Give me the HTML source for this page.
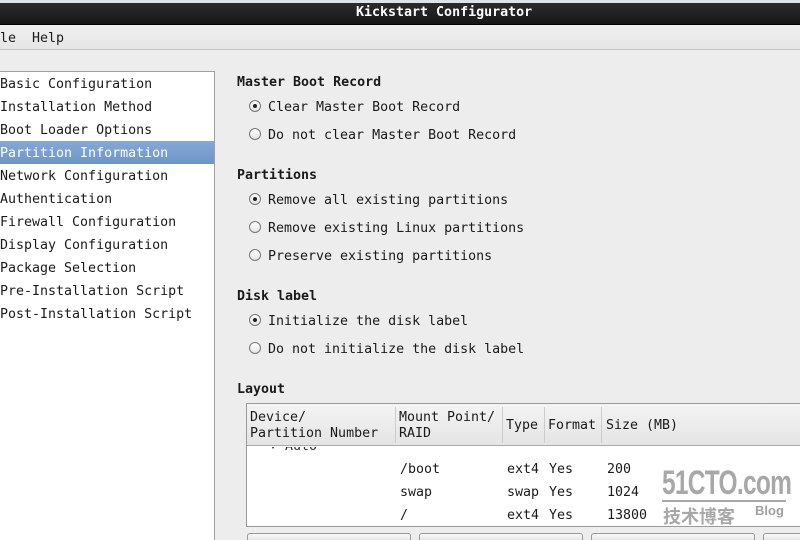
<!DOCTYPE html>
<html style="overflow:hidden;width:800px;height:540px"><head><meta charset="utf-8"><style>
*{margin:0;padding:0;box-sizing:border-box}
body{width:800px;height:540px;overflow:hidden;background:#ededed;position:relative;font-family:"DejaVu Sans Mono","Liberation Mono",monospace;font-size:13.3px;color:#1a1a1a}
.a{position:absolute;white-space:pre;line-height:16px}
.b{font-weight:bold}
.r{position:absolute;width:12px;height:12px;border:1px solid #777;border-radius:50%;background:linear-gradient(#fff,#e4e4e4)}
.r.on::after{content:"";position:absolute;left:3px;top:3px;width:4px;height:4px;border-radius:50%;background:#222}
.btn{position:absolute;top:533px;height:7px;border:1px solid #999;border-bottom:none;border-radius:3px 3px 0 0;background:linear-gradient(#fafafa,#e6e6e6)}
</style></head><body>
<div style="position:absolute;left:0;top:0;width:800px;height:3px;background:#dfe3e8"></div>
<div style="position:absolute;left:0;top:3px;width:800px;height:22px;background:linear-gradient(#2c2c2c,#161616);border-bottom:1px solid #000"></div>
<div class="a b" style="left:356px;top:5px;color:#fff">Kickstart Configurator</div>
<div style="position:absolute;left:0;top:26px;width:800px;height:24px;background:linear-gradient(#eee,#e6e6e6);border-bottom:1px solid #c4c4c4"></div>
<div class="a" style="left:0;top:31px">le  Help</div>
<div style="position:absolute;left:-2px;top:71px;width:217px;height:469px;background:#fff;border:1px solid #a0a0a0;border-bottom:none"></div>
<div style="position:absolute;left:0;top:141px;width:214px;height:23px;background:linear-gradient(#86a9d6,#6f95c8)"></div>
<div class="a" style="left:0;top:77px">Basic Configuration</div>
<div class="a" style="left:0;top:100px">Installation Method</div>
<div class="a" style="left:0;top:123px">Boot Loader Options</div>
<div class="a" style="left:0;top:146px;color:#fff">Partition Information</div>
<div class="a" style="left:0;top:169px">Network Configuration</div>
<div class="a" style="left:0;top:192px">Authentication</div>
<div class="a" style="left:0;top:215px">Firewall Configuration</div>
<div class="a" style="left:0;top:238px">Display Configuration</div>
<div class="a" style="left:0;top:261px">Package Selection</div>
<div class="a" style="left:0;top:284px">Pre-Installation Script</div>
<div class="a" style="left:0;top:307px">Post-Installation Script</div>

<div class="a b" style="left:237px;top:75px">Master Boot Record</div>
<div class="r on" style="left:249px;top:100px"></div><div class="a" style="left:268px;top:100px">Clear Master Boot Record</div>
<div class="r" style="left:249px;top:128px"></div><div class="a" style="left:268px;top:128px">Do not clear Master Boot Record</div>
<div class="a b" style="left:237px;top:168px">Partitions</div>
<div class="r on" style="left:249px;top:193px"></div><div class="a" style="left:268px;top:193px">Remove all existing partitions</div>
<div class="r" style="left:249px;top:221px"></div><div class="a" style="left:268px;top:221px">Remove existing Linux partitions</div>
<div class="r" style="left:249px;top:249px"></div><div class="a" style="left:268px;top:249px">Preserve existing partitions</div>
<div class="a b" style="left:237px;top:289px">Disk label</div>
<div class="r on" style="left:249px;top:314px"></div><div class="a" style="left:268px;top:314px">Initialize the disk label</div>
<div class="r" style="left:249px;top:342px"></div><div class="a" style="left:268px;top:342px">Do not initialize the disk label</div>
<div class="a b" style="left:237px;top:382px">Layout</div>

<div style="position:absolute;left:246px;top:403px;width:560px;height:124px;background:#fff;border:1px solid #9a9a9a;overflow:hidden">
 <div style="position:absolute;left:0;top:0;width:560px;height:42px;background:linear-gradient(#f4f4f4,#e4e4e4);border-bottom:1px solid #aaa"></div>
 <div style="position:absolute;left:148px;top:3px;width:1px;height:36px;background:#ccc"></div>
 <div style="position:absolute;left:255px;top:3px;width:1px;height:36px;background:#ccc"></div>
 <div style="position:absolute;left:297px;top:3px;width:1px;height:36px;background:#ccc"></div>
 <div style="position:absolute;left:354px;top:3px;width:1px;height:36px;background:#ccc"></div>
 <div class="a" style="left:3px;top:6px">Device/
Partition Number</div>
 <div class="a" style="left:152px;top:6px">Mount Point/
RAID</div>
 <div class="a" style="left:259px;top:14px">Type</div>
 <div class="a" style="left:301px;top:14px">Format</div>
 <div class="a" style="left:359px;top:14px">Size (MB)</div>
 <div class="a" style="left:22px;top:35px;color:#333;clip-path:inset(8px 0 0 0)">▾ Auto</div>
 <div class="a" style="left:153px;top:58px">/boot</div><div class="a" style="left:260px;top:58px">ext4</div><div class="a" style="left:302px;top:58px">Yes</div><div class="a" style="left:360px;top:58px">200</div>
 <div class="a" style="left:153px;top:81px">swap</div><div class="a" style="left:260px;top:81px">swap</div><div class="a" style="left:302px;top:81px">Yes</div><div class="a" style="left:360px;top:81px">1024</div>
 <div class="a" style="left:153px;top:104px">/</div><div class="a" style="left:260px;top:104px">ext4</div><div class="a" style="left:302px;top:104px">Yes</div><div class="a" style="left:360px;top:104px">13800</div>
</div>
<div style="position:absolute;left:662px;top:466px;font:bold 34px 'Liberation Sans Narrow','Liberation Sans',sans-serif;color:#a8a8a8;letter-spacing:-1px;transform:scaleX(.72);transform-origin:left;line-height:34px">51CTO.com</div>
<div style="position:absolute;left:662px;top:500px;width:124px;height:2px;background:#a8a8a8"></div>
<div style="position:absolute;left:663px;top:505px;font:bold 18px 'Noto Sans CJK SC',sans-serif;color:#a8a8a8;line-height:22px">技术博客</div>
<div style="position:absolute;left:755px;top:503px;font:bold 13px 'Liberation Sans',sans-serif;color:#a0a0a0">Blog</div>
<div class="btn" style="left:247px;width:164px"></div>
<div class="btn" style="left:419px;width:164px"></div>
<div class="btn" style="left:591px;width:164px"></div>
<div class="btn" style="left:763px;width:60px"></div>
</body></html>
